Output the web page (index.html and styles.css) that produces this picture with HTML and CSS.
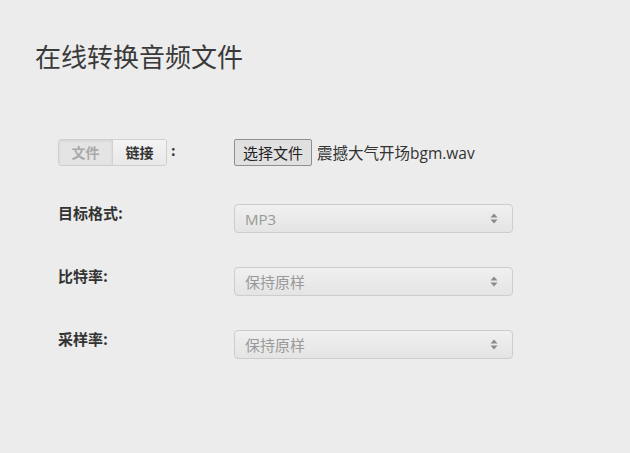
FILE: index.html
```html
<!DOCTYPE html>
<html lang="zh">
<head>
<meta charset="utf-8">
<title>在线转换音频文件</title>
<link rel="stylesheet" href="styles.css">
</head>
<body>
<div class="page">
  <h1 class="title">在线转换音频文件</h1>
  <div class="form">
    <div class="row row-source">
      <div class="label label-source">
        <div class="seg">
          <span class="seg-item active">文件</span>
          <span class="seg-item">链接</span>
        </div>
        <span class="colon">:</span>
      </div>
      <div class="field file-field">
        <span class="file-btn">选择文件</span>
        <span class="file-name">震撼大气开场bgm.wav</span>
      </div>
    </div>
    <div class="row">
      <div class="label">目标格式:</div>
      <div class="field"><div class="select"><span class="val">MP3</span><span class="arrows"><svg width="8" height="11" viewBox="0 0 8 11"><path d="M4 0.5 L7.5 4.5 H0.5 Z M4 10.5 L7.5 6.5 H0.5 Z" fill="#8a8a8a"/></svg></span></div></div>
    </div>
    <div class="row">
      <div class="label">比特率:</div>
      <div class="field"><div class="select"><span class="val">保持原样</span><span class="arrows"><svg width="8" height="11" viewBox="0 0 8 11"><path d="M4 0.5 L7.5 4.5 H0.5 Z M4 10.5 L7.5 6.5 H0.5 Z" fill="#8a8a8a"/></svg></span></div></div>
    </div>
    <div class="row">
      <div class="label">采样率:</div>
      <div class="field"><div class="select"><span class="val">保持原样</span><span class="arrows"><svg width="8" height="11" viewBox="0 0 8 11"><path d="M4 0.5 L7.5 4.5 H0.5 Z M4 10.5 L7.5 6.5 H0.5 Z" fill="#8a8a8a"/></svg></span></div></div>
    </div>
  </div>
</div>
</body>
</html>
```
FILE: styles.css
```css
html, body {
  margin: 0;
  padding: 0;
}
body {
  background: #ececec;
  font-family: "Open Sans", "Noto Sans CJK SC", sans-serif;
  color: #333;
  width: 630px;
  height: 453px;
  overflow: hidden;
}
.page {
  padding: 38px 0 0 35px;
}
.title {
  margin: 0;
  font-size: 26px;
  font-weight: normal;
  line-height: 36px;
  color: #3a3a3a;
  font-family: "Noto Sans CJK SC", sans-serif;
}
.form {
  margin-top: 64px;
  padding-left: 23px;
  display: flex;
  flex-direction: column;
}
.row {
  display: flex;
  align-items: flex-start;
  height: 29px;
  margin-bottom: 34px;
}
.row-source {
  height: 28px;
  margin-bottom: 38px;
  align-items: center;
}
.label {
  width: 176px;
  display: flex;
  align-items: center;
  font-family: "Noto Sans CJK SC", sans-serif;
  font-weight: bold;
  font-size: 15px;
  line-height: 18px;
  color: #333;
}
.label-source {
  font-size: 14px;
}
.seg {
  display: flex;
  border: 1px solid #cfcfcf;
  border-radius: 3px;
  overflow: hidden;
  height: 25px;
}
.seg-item {
  display: flex;
  align-items: center;
  justify-content: center;
  width: 53px;
  font-size: 14px;
  font-weight: bold;
  color: #333;
  background: linear-gradient(#f4f4f4, #e8e8e8);
}
.seg-item.active {
  color: #a9a9a9;
  background: #e4e4e4;
  border-right: 1px solid #d2d2d2;
  box-shadow: inset 0 1px 3px rgba(0,0,0,0.08);
}
.colon {
  margin-left: 4px;
  font-weight: bold;
  position: relative;
  top: -2px;
}
.field {
  display: flex;
  align-items: center;
}
.file-btn {
  display: inline-flex;
  align-items: center;
  height: 25px;
  padding: 0 8px;
  border: 1px solid #8f8f8f;
  border-radius: 2px;
  background: #e0e0e0;
  font-family: "Noto Sans CJK SC", sans-serif;
  font-size: 15px;
  color: #222;
}
.file-name {
  margin-left: 5px;
  font-size: 15.5px;
  color: #333;
}
.select {
  border: 1px solid #cdcdcd;
  border-radius: 4px;
  background: linear-gradient(#f0f0f0, #e4e4e4);
  display: flex;
  align-items: center;
  justify-content: space-between;
  padding: 0 14px 0 10px;
  box-sizing: border-box;
  width: 279px;
  height: 29px;
}
.val {
  font-size: 15px;
  color: #999;
}
.arrows {
  display: flex;
  align-items: center;
}
```
